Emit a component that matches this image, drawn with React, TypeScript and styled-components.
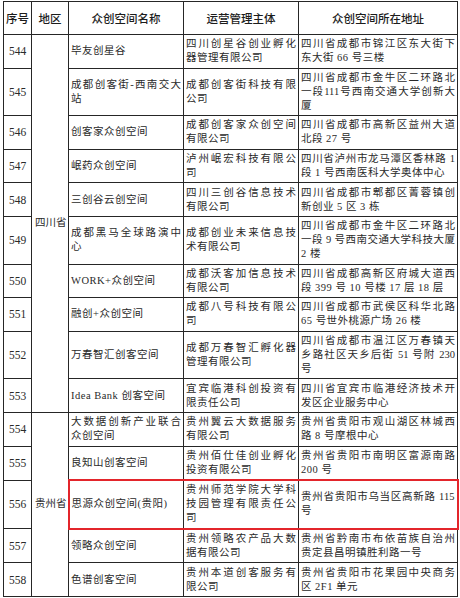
import styled, { createGlobalStyle } from "styled-components";

const GlobalStyle = createGlobalStyle`
  html, body {
    margin: 0;
    padding: 0;
    background: #fff;
  }
`;

const Wrap = styled.div`
  padding: 1px 0 0 3px;
  background: #fff;
`;

const Table = styled.table`
  width: 454px;
  table-layout: fixed;
  border-collapse: collapse;
  color: #2a2a2a;
  font-family: "Liberation Serif", "Noto Sans CJK SC", serif;
  font-size: 10.5px;
  line-height: 14px;
`;

const Th = styled.th`
  height: 32px;
  padding: 0;
  border: 1px solid #262626;
  color: #1c1c1c;
  font-family: "Noto Sans CJK SC", sans-serif;
  font-size: 11.5px;
  font-weight: 500;
  text-align: center;
  vertical-align: middle;
`;

const Td = styled.td<{ $hl?: boolean; $edge?: "left" | "right" }>`
  padding: 2.3px 2px;
  border: 1px solid #262626;
  vertical-align: middle;
  text-align: left;
  ${(p) =>
    p.$hl &&
    `
    border-top: 2px solid #e3252b;
    border-bottom: 2px solid #e3252b;
  `}
  ${(p) => p.$hl && p.$edge === "left" && `border-left: 2px solid #e3252b;`}
  ${(p) => p.$hl && p.$edge === "right" && `border-right: 2px solid #e3252b;`}
`;

const NoCell = styled(Td)`
  text-align: center;
  font-size: 11.5px;
`;

const RegionCell = styled(Td)`
  padding: 0 1px 0 3px;
  white-space: nowrap;
`;

const Line = styled.span<{ $justify: boolean }>`
  display: block;
  text-align: ${(p) => (p.$justify ? "justify" : "left")};
  text-align-last: ${(p) => (p.$justify ? "justify" : "left")};
  letter-spacing: ${(p) => (p.$justify ? "0" : "0.5px")};
`;

interface Row {
  no: number;
  name: string[];
  org: string[];
  addr: string[];
}

const rows: Row[] = [
  {
    no: 544,
    name: ["毕友创星谷"],
    org: ["四川创星谷创业孵化", "器管理有限公司"],
    addr: ["四川省成都市锦江区东大街下", "东大街 66 号三楼"],
  },
  {
    no: 545,
    name: ["成都创客街-西南交大", "站"],
    org: ["成都创客街科技有限", "公司"],
    addr: ["四川省成都市金牛区二环路北", "一段111号西南交通大学创新大", "厦"],
  },
  {
    no: 546,
    name: ["创客家众创空间"],
    org: ["成都创客家众创空间", "有限公司"],
    addr: ["四川省成都市高新区益州大道", "北段 27 号"],
  },
  {
    no: 547,
    name: ["岷药众创空间"],
    org: ["泸州岷宏科技有限公", "司"],
    addr: ["四川省泸州市龙马潭区香林路 1", "段 1 号西南医科大学奥体中心"],
  },
  {
    no: 548,
    name: ["三创谷云创空间"],
    org: ["四川三创谷信息技术", "有限公司"],
    addr: ["四川省成都市郫都区菁蓉镇创", "新创业 5 区 3 栋"],
  },
  {
    no: 549,
    name: ["成都黑马全球路演中", "心"],
    org: ["成都创业未来信息技", "术有限公司"],
    addr: ["四川省成都市金牛区二环路北", "一段 9 号西南交通大学科技大厦", "2 楼"],
  },
  {
    no: 550,
    name: ["WORK+众创空间"],
    org: ["成都沃客加信息技术", "有限公司"],
    addr: ["四川省成都高新区府城大道西", "段 399 号 10 号楼 17 层 18 层"],
  },
  {
    no: 551,
    name: ["融创+众创空间"],
    org: ["成都八号科技有限公", "司"],
    addr: ["四川省成都市武侯区科华北路", "65 号世外桃源广场 26 楼"],
  },
  {
    no: 552,
    name: ["万春智汇创客空间"],
    org: ["成都万春智汇孵化器", "管理有限公司"],
    addr: ["四川省成都市温江区万春镇天", "乡路社区天乡后街 51 号附 230", "号"],
  },
  {
    no: 553,
    name: ["Idea Bank 创客空间"],
    org: ["宜宾临港科创投资有", "限责任公司"],
    addr: ["四川省宜宾市临港经济技术开", "发区企业服务中心"],
  },
  {
    no: 554,
    name: ["大数据创新产业联合", "众创空间"],
    org: ["贵州翼云大数据服务", "有限公司"],
    addr: ["贵州省贵阳市观山湖区林城西", "路 8 号摩根中心"],
  },
  {
    no: 555,
    name: ["良知山创客空间"],
    org: ["贵州佰仕佳创业孵化", "投资有限公司"],
    addr: ["贵州省贵阳市南明区富源南路", "200 号"],
  },
  {
    no: 556,
    name: ["思源众创空间(贵阳)"],
    org: ["贵州师范学院大学科", "技园管理有限责任公", "司"],
    addr: ["贵州省贵阳市乌当区高新路 115", "号"],
  },
  {
    no: 557,
    name: ["领略众创空间"],
    org: ["贵州领略农产品大数", "据有限公司"],
    addr: ["贵州省黔南市布依苗族自治州", "贵定县昌明镇胜利路一号"],
  },
  {
    no: 558,
    name: ["色谱创客空间"],
    org: ["贵州本道创客服务有", "限公司"],
    addr: ["贵州省贵阳市花果园中央商务", "区 2F1 单元"],
  },
];

const regions: Record<number, { label: string; span: number }> = {
  544: { label: "四川省", span: 10 },
  554: { label: "贵州省", span: 5 },
};

const highlighted = 556;

function Lines({ lines }: { lines: string[] }) {
  return (
    <>
      {lines.map((l, i) => (
        <Line key={i} $justify={i < lines.length - 1}>
          {l}
        </Line>
      ))}
    </>
  );
}

export default function App() {
  return (
    <Wrap>
      <GlobalStyle />
      <Table>
        <colgroup>
          <col style={{ width: 28 }} />
          <col style={{ width: 37 }} />
          <col style={{ width: 115 }} />
          <col style={{ width: 115 }} />
          <col style={{ width: 159 }} />
        </colgroup>
        <thead>
          <tr>
            <Th>序号</Th>
            <Th>地区</Th>
            <Th>众创空间名称</Th>
            <Th>运营管理主体</Th>
            <Th>众创空间所在地址</Th>
          </tr>
        </thead>
        <tbody>
          {rows.map((r) => {
            const hl = r.no === highlighted;
            const region = regions[r.no];
            return (
              <tr key={r.no}>
                <NoCell>{r.no}</NoCell>
                {region && (
                  <RegionCell rowSpan={region.span}>{region.label}</RegionCell>
                )}
                <Td $hl={hl} $edge="left">
                  <Lines lines={r.name} />
                </Td>
                <Td $hl={hl}>
                  <Lines lines={r.org} />
                </Td>
                <Td $hl={hl} $edge="right">
                  <Lines lines={r.addr} />
                </Td>
              </tr>
            );
          })}
        </tbody>
      </Table>
    </Wrap>
  );
}
